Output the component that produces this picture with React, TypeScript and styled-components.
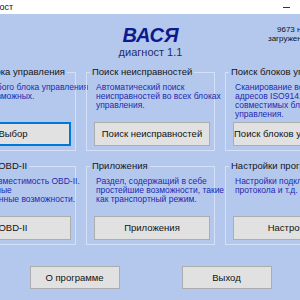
import React from 'react'
import styled, { createGlobalStyle } from 'styled-components'

type Group = {
  title: string
  lines: string[]
  button: string
  primary?: boolean
}

const rows: Group[][] = [
  [
    {
      title: 'Выбор блока управления',
      lines: ['Выбор любого блока управления', 'из всех возможных.'],
      button: 'Выбор',
      primary: true,
    },
    {
      title: 'Поиск неисправностей',
      lines: ['Автоматический поиск', 'неисправностей во всех блоках', 'управления.'],
      button: 'Поиск неисправностей',
    },
    {
      title: 'Поиск блоков управления',
      lines: ['Сканирование всех', 'адресов ISO9141для поиска', 'совместимых блоков', 'управления.'],
      button: 'Поиск блоков управления',
    },
  ],
  [
    {
      title: 'Проверка OBD-II',
      lines: ['Полная совместимость OBD-II.', 'Специальные', 'и расширенные возможности.'],
      button: 'OBD-II',
    },
    {
      title: 'Приложения',
      lines: ['Раздел, содержащий в себе', 'простейшие возможности, такие', 'как транспортный режим.'],
      button: 'Приложения',
    },
    {
      title: 'Настройки программы',
      lines: ['Настройки подключения,', 'протокола и т.д.'],
      button: 'Настройки',
    },
  ],
]

export default function App() {
  return (
    <>
      <GlobalStyle />
      <Viewport>
        <Frame>
          <TitleBar>
            <TitleText>ВАСЯ диагност</TitleText>
            <Controls>
              <Minimize />
              <span>☐</span>
              <span>✕</span>
            </Controls>
          </TitleBar>
          <Header>
            <span />
            <Brand>
              <Logo>ВАСЯ</Logo>
              <Version>диагност 1.1</Version>
            </Brand>
            <Info>
              <InfoLine $indent={9}>9673 неисправностей</InfoLine>
              <InfoLine>загружено из базы</InfoLine>
            </Info>
          </Header>
          <Rows>
            {rows.map((row, i) => (
              <Row key={i}>
                {row.map((g) => (
                  <Box key={g.title}>
                    <Legend>{g.title}</Legend>
                    <Desc>
                      {g.lines.map((l) => (
                        <div key={l}>{l}</div>
                      ))}
                    </Desc>
                    <Button $primary={g.primary}>{g.button}</Button>
                  </Box>
                ))}
              </Row>
            ))}
          </Rows>
          <Footer>
            <FooterButton>О программе</FooterButton>
            <FooterButton>Выход</FooterButton>
          </Footer>
        </Frame>
      </Viewport>
    </>
  )
}

const GlobalStyle = createGlobalStyle`
  html, body {
    margin: 0;
    padding: 0;
    overflow: hidden;
    background: #b4c8ee;
  }
`

const Viewport = styled.div`
  width: 300px;
  height: 300px;
  overflow: hidden;
  display: flex;
  justify-content: center;
  font-family: 'Liberation Sans', Arial, sans-serif;
  background: #b4c8ee;
`

const Frame = styled.div`
  flex: 0 0 407px;
  width: 407px;
  margin-left: 1px;
  display: flex;
  flex-direction: column;
`

const TitleBar = styled.div`
  height: 14px;
  background: #ffffff;
  display: flex;
  align-items: center;
  justify-content: space-between;
  padding-left: 2px;
`

const TitleText = styled.span`
  font-size: 9px;
  color: #111;
`

const Controls = styled.div`
  display: flex;
  align-items: center;
  gap: 14px;
  font-size: 8px;
  color: #222;
  & > * {
    width: 16px;
    text-align: center;
  }
`

const Minimize = styled.i`
  display: flex;
  justify-content: center;
  &::after {
    content: '';
    width: 7px;
    height: 1px;
    margin-top: 1px;
    background: #333;
  }
`

const Header = styled.div`
  display: grid;
  grid-template-columns: 129px 129px 129px;
  column-gap: 10px;
  height: 52px;
`

const Brand = styled.div`
  display: flex;
  flex-direction: column;
  align-items: center;
  padding-top: 10px;
`

const Logo = styled.div`
  font-size: 20px;
  line-height: 22px;
  font-weight: bold;
  font-style: italic;
  color: #0c1a8e;
`

const Version = styled.div`
  font-size: 11px;
  line-height: 13px;
  color: #1e2c6c;
`

const Info = styled.div`
  font-size: 8px;
  line-height: 8.5px;
  color: #111;
  padding-top: 12px;
  padding-left: 43px;
  white-space: nowrap;
`

const InfoLine = styled.div<{ $indent?: number }>`
  padding-left: ${(p) => p.$indent ?? 0}px;
`

const Rows = styled.div`
  display: flex;
  flex-direction: column;
  gap: 9.5px;
`

const Row = styled.div`
  display: grid;
  grid-template-columns: 129px 129px 129px;
  column-gap: 10px;
`

const Box = styled.fieldset`
  margin: 0;
  min-width: 0;
  padding: 0 4px 4px 7px;
  border: 1px solid #d4e0f7;
  display: flex;
  flex-direction: column;
`

const Legend = styled.legend`
  font-size: 9.5px;
  line-height: 12px;
  color: #151515;
  padding: 0 2px;
  margin-left: -4px;
  white-space: nowrap;
`

const Desc = styled.div`
  height: 36px;
  margin-top: 4.5px;
  padding-left: 2px;
  font-size: 8.5px;
  line-height: 9px;
  color: #2329ae;
  white-space: nowrap;
`

const Button = styled.button<{ $primary?: boolean }>`
  margin-top: 3px;
  height: 24px;
  padding: 0;
  background: #e1e1e1;
  border: 1px solid ${(p) => (p.$primary ? '#0078d7' : '#adadad')};
  box-shadow: ${(p) => (p.$primary ? 'inset 0 0 0 1px #0078d7' : 'none')};
  font-family: 'Liberation Sans', Arial, sans-serif;
  font-size: 9.5px;
  color: #111;
  white-space: nowrap;
  overflow: hidden;
`

const Footer = styled.div`
  display: flex;
  justify-content: center;
  gap: 62px;
  padding-top: 21.5px;
`

const FooterButton = styled.button`
  width: 90px;
  height: 23px;
  padding: 0;
  background: #e1e1e1;
  border: 1px solid #adadad;
  font-family: 'Liberation Sans', Arial, sans-serif;
  font-size: 9.5px;
  color: #111;
`
